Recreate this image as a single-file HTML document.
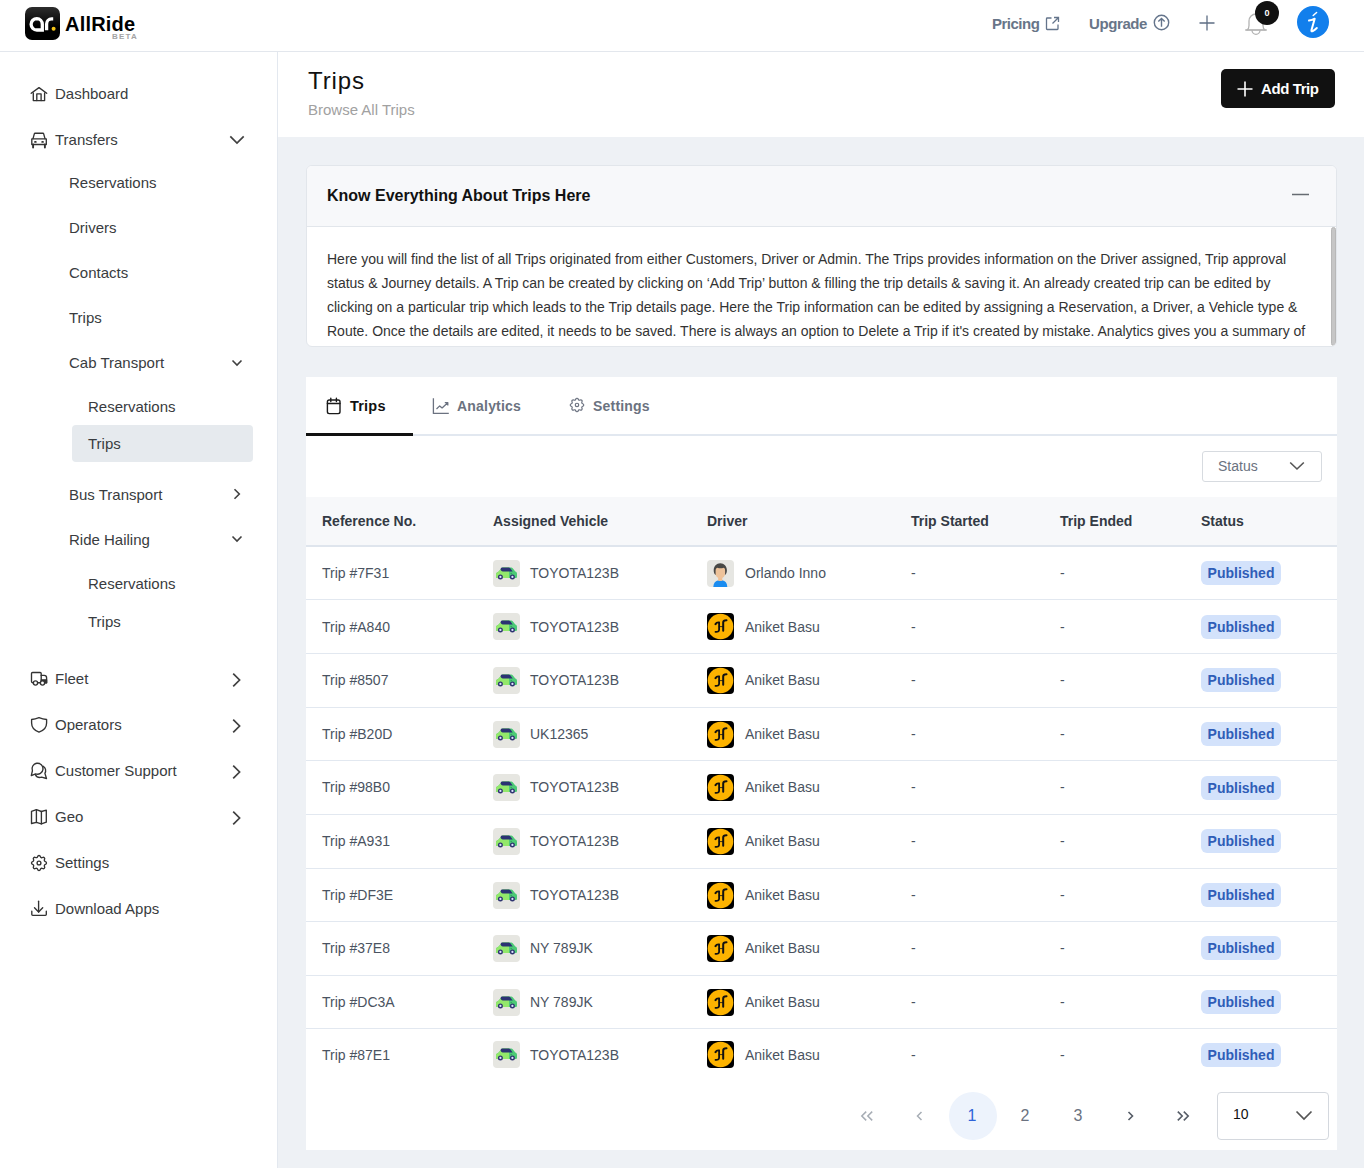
<!DOCTYPE html>
<html><head><meta charset="utf-8">
<style>
*{box-sizing:border-box;margin:0;padding:0}
html,body{width:1364px;height:1168px;overflow:hidden;background:#eef1f5;font-family:"Liberation Sans",sans-serif;color:#374151}
.abs{position:absolute}
svg{display:block}
#hdr{position:absolute;left:0;top:0;width:1364px;height:52px;background:#fff;border-bottom:1px solid #e3e7ed}
#side{position:absolute;left:0;top:52px;width:278px;height:1116px;background:#fff;border-right:1px solid #e3e8ef}
#ph{position:absolute;left:278px;top:52px;width:1086px;height:85px;background:#fff}
.si{position:absolute;font-size:15px;color:#393c40;white-space:nowrap;line-height:18px}
.sico{position:absolute;left:29px;width:20px;height:20px}
.card{position:absolute;background:#fff}
.th{position:absolute;top:512px;font-size:14px;font-weight:bold;color:#333a44;line-height:18px;white-space:nowrap}
.td{position:absolute;font-size:14px;color:#4a5361;line-height:18px;white-space:nowrap}
.badge{position:absolute;left:1201px;width:80px;height:24px;border-radius:6px;background:#d3e2fb;color:#2f5db7;font-weight:bold;font-size:14px;line-height:24px;text-align:center}
.rb{position:absolute;left:306px;width:1031px;height:1px;background:#e2e8f0}
.pg{position:absolute;top:1092px;width:48px;height:48px;line-height:48px;text-align:center;font-size:16px;color:#6b7280}
</style></head><body>

<div id="hdr">
 <div class="abs" style="left:25px;top:7px;width:35px;height:33px;border-radius:7px;background:linear-gradient(#2d2d2d,#000 60%)">
  <svg width="35" height="33" viewBox="0 0 35 33"><path d="M11.8 11.6a5.7 5.7 0 1 0 0 11.4h5.5V17.3a5.7 5.7 0 0 0-5.5-5.7z" fill="none" stroke="#fff" stroke-width="3.3"/><path d="M21.6 23.2v-6.3a5 5 0 0 1 5-5h1.6" fill="none" stroke="#fff" stroke-width="3.3"/><circle cx="28.6" cy="21.8" r="2" fill="#f5c518"/></svg>
 </div>
 <div class="abs" style="left:65px;top:12px;font-size:20px;font-weight:bold;color:#000;letter-spacing:0.2px;line-height:24px">AllRide</div>
 <div class="abs" style="left:112px;top:32px;font-size:8px;font-weight:bold;color:#a3a3a3;letter-spacing:1.2px;line-height:9px">BETA</div>
 <div class="abs" style="left:992px;top:15px;font-size:15px;font-weight:bold;color:#687588;letter-spacing:-0.5px;line-height:18px">Pricing</div>
 <svg class="abs" style="left:1045px;top:16px" width="15" height="15" viewBox="0 0 15 15"><path d="M6.5 2H2.2c-.4 0-.7.3-.7.7v10.1c0 .4.3.7.7.7h10.1c.4 0 .7-.3.7-.7V8.5" fill="none" stroke="#64748b" stroke-width="1.3"/><path d="M9 1.5h4.5V6M13.3 1.7 7.5 7.5" fill="none" stroke="#64748b" stroke-width="1.3"/></svg>
 <div class="abs" style="left:1089px;top:15px;font-size:15px;font-weight:bold;color:#687588;letter-spacing:-0.4px;line-height:18px">Upgrade</div>
 <svg class="abs" style="left:1153px;top:14px" width="17" height="17" viewBox="0 0 17 17"><circle cx="8.5" cy="8.5" r="7.2" fill="none" stroke="#64748b" stroke-width="1.4"/><path d="M8.5 12.8V4.6M5.3 7.6l3.2-3.2 3.2 3.2" fill="none" stroke="#64748b" stroke-width="1.4"/></svg>
 <svg class="abs" style="left:1198px;top:14px" width="18" height="18" viewBox="0 0 18 18"><path d="M9 1.5v15M1.5 9h15" stroke="#5e6e84" stroke-width="1.3"/></svg>
 <svg class="abs" style="left:1243px;top:11px" width="26" height="26" viewBox="0 0 26 26"><path d="M2.3 19H23.7" stroke="#adadad" stroke-width="1.6"/><path d="M4 19c1.5-.8 2-2.5 2-4.5V10a7 7 0 0 1 14 0v4.5c0 2 .5 3.7 2 4.5" fill="none" stroke="#b3b3b3" stroke-width="1.3"/><path d="M9 19.3a4 4 0 0 0 8 0" fill="none" stroke="#b3b3b3" stroke-width="1.3"/></svg>
 <div class="abs" style="left:1255px;top:1px;width:24px;height:24px;border-radius:50%;background:#111;color:#fff;font-size:9px;font-weight:bold;text-align:center;line-height:25px">0</div>
 <div class="abs" style="left:1297px;top:6px;width:32px;height:32px;border-radius:50%;background:#127fec"></div>
 <svg class="abs" style="left:1297px;top:6px" width="32" height="32" viewBox="0 0 32 32"><path d="M12 14.6Q14.8 14.2 17.7 12.7L14.5 24Q14 25.9 15.7 25.1Q17.6 24.1 19.8 22" fill="none" stroke="#fff" stroke-width="2" stroke-linecap="round" stroke-linejoin="round"/><path d="M16.2 9.5 19.6 6.5" stroke="#fff" stroke-width="1.5" stroke-linecap="round"/></svg>
</div>

<div id="side"></div>
<div class="abs" style="left:72px;top:425px;width:181px;height:37px;border-radius:4px;background:#e6eaee"></div>
<div class="si" style="left:55px;top:85px">Dashboard</div>
<svg class="sico" style="top:84px" viewBox="0 0 20 20" fill="none" stroke="#333" stroke-width="1.35" stroke-linecap="round" stroke-linejoin="round"><path d="M2.2 9.3 10 3.6l7.7 5.7"/><path d="M4.3 9v7.6h11.3V9"/><path d="M7.8 16.6V9.9h4.3v6.7"/></svg>
<div class="si" style="left:55px;top:131px">Transfers</div>
<svg class="sico" style="top:130px" viewBox="0 0 20 20" fill="none" stroke="#333" stroke-width="1.35" stroke-linecap="round" stroke-linejoin="round"><path d="M4 8.6 5.4 3.6c.1-.3.3-.4.6-.4h8c.3 0 .5.1.6.4L16 8.6"/><path d="M2.8 8.9h14.5v5.6H2.8z"/><path d="M6 11.9h.8M13.2 11.9h.8" stroke-width="1.8"/><path d="M4.1 14.5v3M15.9 14.5v3" stroke-width="1.9"/></svg>
<svg class="abs" style="left:229px;top:134px" width="16" height="12" viewBox="0 0 16 12"><path d="M1.3 2.3 8 9l6.7-6.7" fill="none" stroke="#404040" stroke-width="1.7"/></svg>
<div class="si" style="left:69px;top:174px">Reservations</div>
<div class="si" style="left:69px;top:219px">Drivers</div>
<div class="si" style="left:69px;top:264px">Contacts</div>
<div class="si" style="left:69px;top:309px">Trips</div>
<div class="si" style="left:69px;top:354px">Cab Transport</div>
<svg class="abs" style="left:231px;top:358px" width="12" height="10" viewBox="0 0 12 10"><path d="M1.5 2.5 6 7l4.5-4.5" fill="none" stroke="#404040" stroke-width="1.6"/></svg>
<div class="si" style="left:88px;top:398px">Reservations</div>
<div class="si" style="left:88px;top:435px">Trips</div>
<div class="si" style="left:69px;top:486px">Bus Transport</div>
<svg class="abs" style="left:231px;top:488px" width="12" height="12" viewBox="0 0 12 12"><path d="M3.5 1.2 8.3 6l-4.8 4.8" fill="none" stroke="#404040" stroke-width="1.6"/></svg>
<div class="si" style="left:69px;top:531px">Ride Hailing</div>
<svg class="abs" style="left:231px;top:534px" width="12" height="10" viewBox="0 0 12 10"><path d="M1.5 2.5 6 7l4.5-4.5" fill="none" stroke="#404040" stroke-width="1.6"/></svg>
<div class="si" style="left:88px;top:575px">Reservations</div>
<div class="si" style="left:88px;top:613px">Trips</div>
<div class="si" style="left:55px;top:670px">Fleet</div>
<svg class="sico" style="top:669px" viewBox="0 0 20 20" fill="none" stroke="#333" stroke-width="1.35" stroke-linecap="round" stroke-linejoin="round"><path d="M4.2 13.7H3.6c-.6 0-1.1-.5-1.1-1.1V4.6c0-.6.5-1.1 1.1-1.1h7.5c.6 0 1.1.5 1.1 1.1v9.1H8.6"/><path d="M12.2 6.4h3c1.3 0 2.4 1.1 2.4 2.4v4.9h-1.2"/><path d="M12.3 10.8h5.3v2.9h-5.3z" fill="#333"/><circle cx="6.5" cy="14" r="2.1" fill="#fff"/><circle cx="13.5" cy="14" r="2.1" fill="#fff"/></svg>
<svg class="abs" style="left:229px;top:672px" width="16" height="16" viewBox="0 0 16 16"><path d="M4.2 1.6 10.6 8l-6.4 6.4" fill="none" stroke="#404040" stroke-width="1.7"/></svg>
<div class="si" style="left:55px;top:716px">Operators</div>
<svg class="sico" style="top:715px" viewBox="0 0 20 20" fill="none" stroke="#333" stroke-width="1.35" stroke-linecap="round" stroke-linejoin="round"><path d="M2.6 4.5Q6.2 4.2 10 2.6 13.8 4.2 17.6 4.5V8c0 4.2-3 7.6-7.6 9.1C5.6 15.6 2.6 12.2 2.6 8z"/></svg>
<svg class="abs" style="left:229px;top:718px" width="16" height="16" viewBox="0 0 16 16"><path d="M4.2 1.6 10.6 8l-6.4 6.4" fill="none" stroke="#404040" stroke-width="1.7"/></svg>
<div class="si" style="left:55px;top:762px">Customer Support</div>
<svg class="sico" style="top:761px" viewBox="0 0 20 20" fill="none" stroke="#333" stroke-width="1.35" stroke-linecap="round" stroke-linejoin="round"><path d="M3.4 9.8 2.3 14.6l4.3-1.7A5.5 5.5 0 1 0 3.4 9.8z"/><path d="M14.2 5.2a5.3 5.3 0 0 1 1.7 7.2l1.6 5.1-4.9-1.3a5.3 5.3 0 0 1-6.3-2.6"/></svg>
<svg class="abs" style="left:229px;top:764px" width="16" height="16" viewBox="0 0 16 16"><path d="M4.2 1.6 10.6 8l-6.4 6.4" fill="none" stroke="#404040" stroke-width="1.7"/></svg>
<div class="si" style="left:55px;top:808px">Geo</div>
<svg class="sico" style="top:807px" viewBox="0 0 20 20" fill="none" stroke="#333" stroke-width="1.35" stroke-linecap="round" stroke-linejoin="round"><path d="M2.5 4.3 7.4 2.6l5 1.9 4.9-1.4v12.1l-4.9 1.7-5-1.6-4.9 1.2z"/><path d="M7.4 2.6v12.7M12.4 4.5v12.4"/></svg>
<svg class="abs" style="left:229px;top:810px" width="16" height="16" viewBox="0 0 16 16"><path d="M4.2 1.6 10.6 8l-6.4 6.4" fill="none" stroke="#404040" stroke-width="1.7"/></svg>
<div class="si" style="left:55px;top:854px">Settings</div>
<svg class="sico" style="top:853px" viewBox="0 0 20 20" fill="none" stroke="#333" stroke-width="1.35" stroke-linecap="round" stroke-linejoin="round"><g transform="scale(.8333)"><path d="M10.325 4.317c.426-1.756 2.924-1.756 3.35 0a1.724 1.724 0 0 0 2.573 1.066c1.543-.94 3.31.826 2.37 2.37a1.724 1.724 0 0 0 1.065 2.572c1.756.426 1.756 2.924 0 3.35a1.724 1.724 0 0 0-1.066 2.573c.94 1.543-.826 3.31-2.37 2.37a1.724 1.724 0 0 0-2.572 1.065c-.426 1.756-2.924 1.756-3.35 0a1.724 1.724 0 0 0-2.573-1.066c-1.543.94-3.31-.826-2.37-2.37a1.724 1.724 0 0 0-1.065-2.572c-1.756-.426-1.756-2.924 0-3.35a1.724 1.724 0 0 0 1.066-2.573c-.94-1.543.826-3.31 2.37-2.37 1 .608 2.296.07 2.572-1.065z" stroke-width="1.6"/><circle cx="12" cy="12" r="2.3" stroke-width="1.6"/></g></svg>
<div class="si" style="left:55px;top:900px">Download Apps</div>
<svg class="sico" style="top:899px" viewBox="0 0 20 20" fill="none" stroke="#333" stroke-width="1.35" stroke-linecap="round" stroke-linejoin="round"><path d="M9.6 2.2V13"/><path d="M5.5 8.8 9.6 13l4.1-4.2"/><path d="M2.8 12.2v3.3c0 .5.4.8.9.8h12.7c.5 0 .9-.3.9-.8v-3.3"/></svg>
<div id="ph">
 <div class="abs" style="left:30px;top:15px;font-size:24px;color:#111;letter-spacing:0.9px;line-height:28px">Trips</div>
 <div class="abs" style="left:30px;top:49px;font-size:15px;color:#a1a1a1;line-height:18px">Browse All Trips</div>
 <div class="abs" style="left:943px;top:17px;width:114px;height:39px;background:#111;border-radius:5px"></div>
 <svg class="abs" style="left:959px;top:29px" width="16" height="16" viewBox="0 0 16 16"><path d="M8 0.5v15M0.5 8h15" stroke="#fff" stroke-width="1.6"/></svg>
 <div class="abs" style="left:983px;top:28px;font-size:15px;font-weight:bold;color:#fff;letter-spacing:-0.4px;line-height:18px">Add Trip</div>
</div>

<div class="card" style="left:306px;top:165px;width:1031px;height:182px;border:1px solid #e2e6eb;border-radius:6px;overflow:hidden">
 <div class="abs" style="left:0;top:0;width:1031px;height:61px;background:#f7f8fa;border-bottom:1px solid #e2e6eb"></div>
 <div class="abs" style="left:20px;top:21px;font-size:16px;font-weight:bold;color:#111;line-height:18px">Know Everything About Trips Here</div>
 <svg class="abs" style="left:985px;top:27px" width="17" height="3" viewBox="0 0 17 3"><path d="M0 1.5h17" stroke="#666b72" stroke-width="1.6"/></svg>
 <div class="abs" style="left:20px;top:81px;font-size:14px;color:#333;line-height:24px;white-space:nowrap">Here you will find the list of all Trips originated from either Customers, Driver or Admin. The Trips provides information on the Driver assigned, Trip approval<br>status &amp; Journey details. A Trip can be created by clicking on ‘Add Trip’ button &amp; filling the trip details &amp; saving it. An already created trip can be edited by<br>clicking on a particular trip which leads to the Trip details page. Here the Trip information can be edited by assigning a Reservation, a Driver, a Vehicle type &amp;<br>Route. Once the details are edited, it needs to be saved. There is always an option to Delete a Trip if it's created by mistake. Analytics gives you a summary of</div>
 <div class="abs" style="left:1024px;top:61px;width:5px;height:119px;border-radius:3px;background:#c6c6c6;border:1px solid #b8b8b8"></div>
</div>

<div class="card" style="left:306px;top:377px;width:1031px;height:773px"></div>
<div class="abs" style="left:306px;top:434px;width:1031px;height:2px;background:#e2e8f0"></div>
<div class="abs" style="left:306px;top:433px;width:107px;height:3px;background:#111"></div>
<svg class="abs" style="left:325px;top:396px" width="18" height="20" viewBox="0 0 18 20" fill="none" stroke="#1a1a1a" stroke-width="1.4" stroke-linecap="round" stroke-linejoin="round"><rect x="2.4" y="4" width="12.6" height="13.6" rx="1.8"/><path d="M5.8 2.3v3.2M11.4 2.3v3.2M2.4 7.5h12.6"/></svg>
<div class="abs" style="left:350px;top:397px;font-size:14.5px;font-weight:bold;color:#111;line-height:18px;letter-spacing:0.2px">Trips</div>
<svg class="abs" style="left:431px;top:396px" width="20" height="20" viewBox="0 0 20 20" fill="none" stroke="#6b7280" stroke-width="1.3" stroke-linejoin="round"><path d="M2.4 2.2v15.2h15.4"/><path d="M5.5 13l3.2-3.1 2.4 2 5.6-5.2M13.8 6.6h3v3"/></svg>
<div class="abs" style="left:457px;top:397px;font-size:14px;font-weight:bold;color:#6b7280;line-height:18px;letter-spacing:0.2px">Analytics</div>
<svg class="abs" style="left:568px;top:396px" width="18" height="18" viewBox="0 0 20 20" fill="none" stroke="#6b7280" stroke-width="1.6" stroke-linecap="round" stroke-linejoin="round"><g transform="scale(.8333)"><path d="M10.325 4.317c.426-1.756 2.924-1.756 3.35 0a1.724 1.724 0 0 0 2.573 1.066c1.543-.94 3.31.826 2.37 2.37a1.724 1.724 0 0 0 1.065 2.572c1.756.426 1.756 2.924 0 3.35a1.724 1.724 0 0 0-1.066 2.573c.94 1.543-.826 3.31-2.37 2.37a1.724 1.724 0 0 0-2.572 1.065c-.426 1.756-2.924 1.756-3.35 0a1.724 1.724 0 0 0-2.573-1.066c-1.543.94-3.31-.826-2.37-2.37a1.724 1.724 0 0 0-1.065-2.572c-1.756-.426-1.756-2.924 0-3.35a1.724 1.724 0 0 0 1.066-2.573c-.94-1.543.826-3.31 2.37-2.37 1 .608 2.296.07 2.572-1.065z" stroke-width="1.6"/><circle cx="12" cy="12" r="2.3" stroke-width="1.6"/></g></svg>
<div class="abs" style="left:593px;top:397px;font-size:14px;font-weight:bold;color:#6b7280;line-height:18px;letter-spacing:0.2px">Settings</div>
<div class="abs" style="left:1202px;top:451px;width:120px;height:31px;border:1px solid #d7dbe0;border-radius:3px;background:#fff"></div>
<div class="abs" style="left:1218px;top:457px;font-size:14px;color:#6b7280;line-height:18px">Status</div>
<svg class="abs" style="left:1289px;top:460px" width="16" height="12" viewBox="0 0 16 12"><path d="M1.2 2.5 8 9l6.8-6.5" fill="none" stroke="#555" stroke-width="1.6"/></svg>
<div class="abs" style="left:306px;top:497px;width:1031px;height:48px;background:#f7f8fa"></div>
<div class="abs" style="left:306px;top:545px;width:1031px;height:2px;background:#dfe5ed"></div>

<div class="th" style="left:322px">Reference No.</div>
<div class="th" style="left:493px">Assigned Vehicle</div>
<div class="th" style="left:707px">Driver</div>
<div class="th" style="left:911px">Trip Started</div>
<div class="th" style="left:1060px">Trip Ended</div>
<div class="th" style="left:1201px">Status</div>
<div class="rb" style="top:599px"></div>
<div class="td" style="left:322px;top:564px">Trip #7F31</div>
<div class="abs" style="left:493px;top:560px"><svg width="27" height="27" viewBox="0 0 27 27"><defs><clipPath id="cl"><rect x="0" y="0" width="16.1" height="27"/></clipPath></defs><rect width="27" height="27" rx="4" fill="#e6e6e1"/><path d="M3.2 17.8 3 14.3c0-1.2 1-2.1 2.4-2.6l2.9-3.3c.5-.6 1.2-.9 1.9-.9h8c.6 0 1.1.3 1.5.7l2.6 3.3c1 .3 1.7 1.2 1.7 2.3v3.3c0 .5-.4.9-.9.9H4z" fill="#4cca76"/><path clip-path="url(#cl)" d="M3.2 17.8 3 14.3c0-1.2 1-2.1 2.4-2.6l2.9-3.3c.5-.6 1.2-.9 1.9-.9h8c.6 0 1.1.3 1.5.7l2.6 3.3c1 .3 1.7 1.2 1.7 2.3v3.3c0 .5-.4.9-.9.9H4z" fill="#93e86b"/><path d="M7.6 9.2c0-1 .8-1.7 1.8-1.7h6.4c.5 0 1 .2 1.3.6l2.6 3.3H9.9c-1.3 0-2.3-1-2.3-2.2z" fill="#2b3273"/><circle cx="7.4" cy="16.9" r="2.5" fill="#2e3470"/><circle cx="7.4" cy="16.9" r="1.1" fill="#dfe6ff"/><circle cx="19.4" cy="16.9" r="2.5" fill="#2e3470"/><circle cx="19.4" cy="16.9" r="1.1" fill="#dfe6ff"/><rect x="17.6" y="13.2" width="1.2" height=".7" fill="#2b7d5a"/></svg></div>
<div class="td" style="left:530px;top:564px">TOYOTA123B</div>
<div class="abs" style="left:707px;top:560px"><svg width="27" height="27" viewBox="0 0 27 27"><rect width="27" height="27" rx="4" fill="#e6e6e2"/><path d="M6.3 27c.2-4 2.2-6.3 5.2-6.7q1.8 1 3.7 0c3.1.4 5 2.7 5.1 6.7z" fill="#1a8cf0"/><rect x="11.2" y="16" width="4.1" height="4.8" fill="#f0bd8f"/><path d="M6.7 10.2c0-4 2.8-6.9 6.6-6.9s6.6 2.9 6.6 6.9c0 2.2-.6 3.7-1.6 4.6H8.3c-1-.9-1.6-2.4-1.6-4.6z" fill="#484846"/><path d="M8.6 10.6c0-2 1.2-2.9 2.3-2.7q2.6.8 5.3 0c1.1-.2 1.9.7 1.9 2.7v2.9c0 2.6-2.1 5-4.75 5S8.6 16.1 8.6 13.5z" fill="#edc29a"/></svg></div>
<div class="td" style="left:745px;top:564px">Orlando Inno</div>
<div class="td" style="left:911px;top:564px">-</div>
<div class="td" style="left:1060px;top:564px">-</div>
<div class="badge" style="top:561px">Published</div>
<div class="rb" style="top:653px"></div>
<div class="td" style="left:322px;top:618px">Trip #A840</div>
<div class="abs" style="left:493px;top:613px"><svg width="27" height="27" viewBox="0 0 27 27"><defs><clipPath id="cl"><rect x="0" y="0" width="16.1" height="27"/></clipPath></defs><rect width="27" height="27" rx="4" fill="#e6e6e1"/><path d="M3.2 17.8 3 14.3c0-1.2 1-2.1 2.4-2.6l2.9-3.3c.5-.6 1.2-.9 1.9-.9h8c.6 0 1.1.3 1.5.7l2.6 3.3c1 .3 1.7 1.2 1.7 2.3v3.3c0 .5-.4.9-.9.9H4z" fill="#4cca76"/><path clip-path="url(#cl)" d="M3.2 17.8 3 14.3c0-1.2 1-2.1 2.4-2.6l2.9-3.3c.5-.6 1.2-.9 1.9-.9h8c.6 0 1.1.3 1.5.7l2.6 3.3c1 .3 1.7 1.2 1.7 2.3v3.3c0 .5-.4.9-.9.9H4z" fill="#93e86b"/><path d="M7.6 9.2c0-1 .8-1.7 1.8-1.7h6.4c.5 0 1 .2 1.3.6l2.6 3.3H9.9c-1.3 0-2.3-1-2.3-2.2z" fill="#2b3273"/><circle cx="7.4" cy="16.9" r="2.5" fill="#2e3470"/><circle cx="7.4" cy="16.9" r="1.1" fill="#dfe6ff"/><circle cx="19.4" cy="16.9" r="2.5" fill="#2e3470"/><circle cx="19.4" cy="16.9" r="1.1" fill="#dfe6ff"/><rect x="17.6" y="13.2" width="1.2" height=".7" fill="#2b7d5a"/></svg></div>
<div class="td" style="left:530px;top:618px">TOYOTA123B</div>
<div class="abs" style="left:707px;top:613px"><svg width="27" height="27" viewBox="0 0 27 27"><rect width="27" height="27" rx="4" fill="#000"/><circle cx="13.5" cy="13.5" r="12.8" fill="#fdb300"/><g fill="none" stroke="#111" stroke-linecap="round"><path d="M8.4 11.2c.7-1.4 2.1-1.9 3.7-1.7v7.3c0 1.6-1.5 2.3-3.6 2" stroke-width="1.8"/><path d="M16.2 17.8V9.6c0-1.3 1.4-2.3 3.3-2.3" stroke-width="2"/><path d="M12.2 13.6h4" stroke-width=".8"/></g><circle cx="8.7" cy="11" r=".9" fill="#111"/></svg></div>
<div class="td" style="left:745px;top:618px">Aniket Basu</div>
<div class="td" style="left:911px;top:618px">-</div>
<div class="td" style="left:1060px;top:618px">-</div>
<div class="badge" style="top:615px">Published</div>
<div class="rb" style="top:707px"></div>
<div class="td" style="left:322px;top:671px">Trip #8507</div>
<div class="abs" style="left:493px;top:667px"><svg width="27" height="27" viewBox="0 0 27 27"><defs><clipPath id="cl"><rect x="0" y="0" width="16.1" height="27"/></clipPath></defs><rect width="27" height="27" rx="4" fill="#e6e6e1"/><path d="M3.2 17.8 3 14.3c0-1.2 1-2.1 2.4-2.6l2.9-3.3c.5-.6 1.2-.9 1.9-.9h8c.6 0 1.1.3 1.5.7l2.6 3.3c1 .3 1.7 1.2 1.7 2.3v3.3c0 .5-.4.9-.9.9H4z" fill="#4cca76"/><path clip-path="url(#cl)" d="M3.2 17.8 3 14.3c0-1.2 1-2.1 2.4-2.6l2.9-3.3c.5-.6 1.2-.9 1.9-.9h8c.6 0 1.1.3 1.5.7l2.6 3.3c1 .3 1.7 1.2 1.7 2.3v3.3c0 .5-.4.9-.9.9H4z" fill="#93e86b"/><path d="M7.6 9.2c0-1 .8-1.7 1.8-1.7h6.4c.5 0 1 .2 1.3.6l2.6 3.3H9.9c-1.3 0-2.3-1-2.3-2.2z" fill="#2b3273"/><circle cx="7.4" cy="16.9" r="2.5" fill="#2e3470"/><circle cx="7.4" cy="16.9" r="1.1" fill="#dfe6ff"/><circle cx="19.4" cy="16.9" r="2.5" fill="#2e3470"/><circle cx="19.4" cy="16.9" r="1.1" fill="#dfe6ff"/><rect x="17.6" y="13.2" width="1.2" height=".7" fill="#2b7d5a"/></svg></div>
<div class="td" style="left:530px;top:671px">TOYOTA123B</div>
<div class="abs" style="left:707px;top:667px"><svg width="27" height="27" viewBox="0 0 27 27"><rect width="27" height="27" rx="4" fill="#000"/><circle cx="13.5" cy="13.5" r="12.8" fill="#fdb300"/><g fill="none" stroke="#111" stroke-linecap="round"><path d="M8.4 11.2c.7-1.4 2.1-1.9 3.7-1.7v7.3c0 1.6-1.5 2.3-3.6 2" stroke-width="1.8"/><path d="M16.2 17.8V9.6c0-1.3 1.4-2.3 3.3-2.3" stroke-width="2"/><path d="M12.2 13.6h4" stroke-width=".8"/></g><circle cx="8.7" cy="11" r=".9" fill="#111"/></svg></div>
<div class="td" style="left:745px;top:671px">Aniket Basu</div>
<div class="td" style="left:911px;top:671px">-</div>
<div class="td" style="left:1060px;top:671px">-</div>
<div class="badge" style="top:668px">Published</div>
<div class="rb" style="top:760px"></div>
<div class="td" style="left:322px;top:725px">Trip #B20D</div>
<div class="abs" style="left:493px;top:721px"><svg width="27" height="27" viewBox="0 0 27 27"><defs><clipPath id="cl"><rect x="0" y="0" width="16.1" height="27"/></clipPath></defs><rect width="27" height="27" rx="4" fill="#e6e6e1"/><path d="M3.2 17.8 3 14.3c0-1.2 1-2.1 2.4-2.6l2.9-3.3c.5-.6 1.2-.9 1.9-.9h8c.6 0 1.1.3 1.5.7l2.6 3.3c1 .3 1.7 1.2 1.7 2.3v3.3c0 .5-.4.9-.9.9H4z" fill="#4cca76"/><path clip-path="url(#cl)" d="M3.2 17.8 3 14.3c0-1.2 1-2.1 2.4-2.6l2.9-3.3c.5-.6 1.2-.9 1.9-.9h8c.6 0 1.1.3 1.5.7l2.6 3.3c1 .3 1.7 1.2 1.7 2.3v3.3c0 .5-.4.9-.9.9H4z" fill="#93e86b"/><path d="M7.6 9.2c0-1 .8-1.7 1.8-1.7h6.4c.5 0 1 .2 1.3.6l2.6 3.3H9.9c-1.3 0-2.3-1-2.3-2.2z" fill="#2b3273"/><circle cx="7.4" cy="16.9" r="2.5" fill="#2e3470"/><circle cx="7.4" cy="16.9" r="1.1" fill="#dfe6ff"/><circle cx="19.4" cy="16.9" r="2.5" fill="#2e3470"/><circle cx="19.4" cy="16.9" r="1.1" fill="#dfe6ff"/><rect x="17.6" y="13.2" width="1.2" height=".7" fill="#2b7d5a"/></svg></div>
<div class="td" style="left:530px;top:725px">UK12365</div>
<div class="abs" style="left:707px;top:721px"><svg width="27" height="27" viewBox="0 0 27 27"><rect width="27" height="27" rx="4" fill="#000"/><circle cx="13.5" cy="13.5" r="12.8" fill="#fdb300"/><g fill="none" stroke="#111" stroke-linecap="round"><path d="M8.4 11.2c.7-1.4 2.1-1.9 3.7-1.7v7.3c0 1.6-1.5 2.3-3.6 2" stroke-width="1.8"/><path d="M16.2 17.8V9.6c0-1.3 1.4-2.3 3.3-2.3" stroke-width="2"/><path d="M12.2 13.6h4" stroke-width=".8"/></g><circle cx="8.7" cy="11" r=".9" fill="#111"/></svg></div>
<div class="td" style="left:745px;top:725px">Aniket Basu</div>
<div class="td" style="left:911px;top:725px">-</div>
<div class="td" style="left:1060px;top:725px">-</div>
<div class="badge" style="top:722px">Published</div>
<div class="rb" style="top:814px"></div>
<div class="td" style="left:322px;top:778px">Trip #98B0</div>
<div class="abs" style="left:493px;top:774px"><svg width="27" height="27" viewBox="0 0 27 27"><defs><clipPath id="cl"><rect x="0" y="0" width="16.1" height="27"/></clipPath></defs><rect width="27" height="27" rx="4" fill="#e6e6e1"/><path d="M3.2 17.8 3 14.3c0-1.2 1-2.1 2.4-2.6l2.9-3.3c.5-.6 1.2-.9 1.9-.9h8c.6 0 1.1.3 1.5.7l2.6 3.3c1 .3 1.7 1.2 1.7 2.3v3.3c0 .5-.4.9-.9.9H4z" fill="#4cca76"/><path clip-path="url(#cl)" d="M3.2 17.8 3 14.3c0-1.2 1-2.1 2.4-2.6l2.9-3.3c.5-.6 1.2-.9 1.9-.9h8c.6 0 1.1.3 1.5.7l2.6 3.3c1 .3 1.7 1.2 1.7 2.3v3.3c0 .5-.4.9-.9.9H4z" fill="#93e86b"/><path d="M7.6 9.2c0-1 .8-1.7 1.8-1.7h6.4c.5 0 1 .2 1.3.6l2.6 3.3H9.9c-1.3 0-2.3-1-2.3-2.2z" fill="#2b3273"/><circle cx="7.4" cy="16.9" r="2.5" fill="#2e3470"/><circle cx="7.4" cy="16.9" r="1.1" fill="#dfe6ff"/><circle cx="19.4" cy="16.9" r="2.5" fill="#2e3470"/><circle cx="19.4" cy="16.9" r="1.1" fill="#dfe6ff"/><rect x="17.6" y="13.2" width="1.2" height=".7" fill="#2b7d5a"/></svg></div>
<div class="td" style="left:530px;top:778px">TOYOTA123B</div>
<div class="abs" style="left:707px;top:774px"><svg width="27" height="27" viewBox="0 0 27 27"><rect width="27" height="27" rx="4" fill="#000"/><circle cx="13.5" cy="13.5" r="12.8" fill="#fdb300"/><g fill="none" stroke="#111" stroke-linecap="round"><path d="M8.4 11.2c.7-1.4 2.1-1.9 3.7-1.7v7.3c0 1.6-1.5 2.3-3.6 2" stroke-width="1.8"/><path d="M16.2 17.8V9.6c0-1.3 1.4-2.3 3.3-2.3" stroke-width="2"/><path d="M12.2 13.6h4" stroke-width=".8"/></g><circle cx="8.7" cy="11" r=".9" fill="#111"/></svg></div>
<div class="td" style="left:745px;top:778px">Aniket Basu</div>
<div class="td" style="left:911px;top:778px">-</div>
<div class="td" style="left:1060px;top:778px">-</div>
<div class="badge" style="top:776px">Published</div>
<div class="rb" style="top:868px"></div>
<div class="td" style="left:322px;top:832px">Trip #A931</div>
<div class="abs" style="left:493px;top:828px"><svg width="27" height="27" viewBox="0 0 27 27"><defs><clipPath id="cl"><rect x="0" y="0" width="16.1" height="27"/></clipPath></defs><rect width="27" height="27" rx="4" fill="#e6e6e1"/><path d="M3.2 17.8 3 14.3c0-1.2 1-2.1 2.4-2.6l2.9-3.3c.5-.6 1.2-.9 1.9-.9h8c.6 0 1.1.3 1.5.7l2.6 3.3c1 .3 1.7 1.2 1.7 2.3v3.3c0 .5-.4.9-.9.9H4z" fill="#4cca76"/><path clip-path="url(#cl)" d="M3.2 17.8 3 14.3c0-1.2 1-2.1 2.4-2.6l2.9-3.3c.5-.6 1.2-.9 1.9-.9h8c.6 0 1.1.3 1.5.7l2.6 3.3c1 .3 1.7 1.2 1.7 2.3v3.3c0 .5-.4.9-.9.9H4z" fill="#93e86b"/><path d="M7.6 9.2c0-1 .8-1.7 1.8-1.7h6.4c.5 0 1 .2 1.3.6l2.6 3.3H9.9c-1.3 0-2.3-1-2.3-2.2z" fill="#2b3273"/><circle cx="7.4" cy="16.9" r="2.5" fill="#2e3470"/><circle cx="7.4" cy="16.9" r="1.1" fill="#dfe6ff"/><circle cx="19.4" cy="16.9" r="2.5" fill="#2e3470"/><circle cx="19.4" cy="16.9" r="1.1" fill="#dfe6ff"/><rect x="17.6" y="13.2" width="1.2" height=".7" fill="#2b7d5a"/></svg></div>
<div class="td" style="left:530px;top:832px">TOYOTA123B</div>
<div class="abs" style="left:707px;top:828px"><svg width="27" height="27" viewBox="0 0 27 27"><rect width="27" height="27" rx="4" fill="#000"/><circle cx="13.5" cy="13.5" r="12.8" fill="#fdb300"/><g fill="none" stroke="#111" stroke-linecap="round"><path d="M8.4 11.2c.7-1.4 2.1-1.9 3.7-1.7v7.3c0 1.6-1.5 2.3-3.6 2" stroke-width="1.8"/><path d="M16.2 17.8V9.6c0-1.3 1.4-2.3 3.3-2.3" stroke-width="2"/><path d="M12.2 13.6h4" stroke-width=".8"/></g><circle cx="8.7" cy="11" r=".9" fill="#111"/></svg></div>
<div class="td" style="left:745px;top:832px">Aniket Basu</div>
<div class="td" style="left:911px;top:832px">-</div>
<div class="td" style="left:1060px;top:832px">-</div>
<div class="badge" style="top:829px">Published</div>
<div class="rb" style="top:921px"></div>
<div class="td" style="left:322px;top:886px">Trip #DF3E</div>
<div class="abs" style="left:493px;top:882px"><svg width="27" height="27" viewBox="0 0 27 27"><defs><clipPath id="cl"><rect x="0" y="0" width="16.1" height="27"/></clipPath></defs><rect width="27" height="27" rx="4" fill="#e6e6e1"/><path d="M3.2 17.8 3 14.3c0-1.2 1-2.1 2.4-2.6l2.9-3.3c.5-.6 1.2-.9 1.9-.9h8c.6 0 1.1.3 1.5.7l2.6 3.3c1 .3 1.7 1.2 1.7 2.3v3.3c0 .5-.4.9-.9.9H4z" fill="#4cca76"/><path clip-path="url(#cl)" d="M3.2 17.8 3 14.3c0-1.2 1-2.1 2.4-2.6l2.9-3.3c.5-.6 1.2-.9 1.9-.9h8c.6 0 1.1.3 1.5.7l2.6 3.3c1 .3 1.7 1.2 1.7 2.3v3.3c0 .5-.4.9-.9.9H4z" fill="#93e86b"/><path d="M7.6 9.2c0-1 .8-1.7 1.8-1.7h6.4c.5 0 1 .2 1.3.6l2.6 3.3H9.9c-1.3 0-2.3-1-2.3-2.2z" fill="#2b3273"/><circle cx="7.4" cy="16.9" r="2.5" fill="#2e3470"/><circle cx="7.4" cy="16.9" r="1.1" fill="#dfe6ff"/><circle cx="19.4" cy="16.9" r="2.5" fill="#2e3470"/><circle cx="19.4" cy="16.9" r="1.1" fill="#dfe6ff"/><rect x="17.6" y="13.2" width="1.2" height=".7" fill="#2b7d5a"/></svg></div>
<div class="td" style="left:530px;top:886px">TOYOTA123B</div>
<div class="abs" style="left:707px;top:882px"><svg width="27" height="27" viewBox="0 0 27 27"><rect width="27" height="27" rx="4" fill="#000"/><circle cx="13.5" cy="13.5" r="12.8" fill="#fdb300"/><g fill="none" stroke="#111" stroke-linecap="round"><path d="M8.4 11.2c.7-1.4 2.1-1.9 3.7-1.7v7.3c0 1.6-1.5 2.3-3.6 2" stroke-width="1.8"/><path d="M16.2 17.8V9.6c0-1.3 1.4-2.3 3.3-2.3" stroke-width="2"/><path d="M12.2 13.6h4" stroke-width=".8"/></g><circle cx="8.7" cy="11" r=".9" fill="#111"/></svg></div>
<div class="td" style="left:745px;top:886px">Aniket Basu</div>
<div class="td" style="left:911px;top:886px">-</div>
<div class="td" style="left:1060px;top:886px">-</div>
<div class="badge" style="top:883px">Published</div>
<div class="rb" style="top:975px"></div>
<div class="td" style="left:322px;top:939px">Trip #37E8</div>
<div class="abs" style="left:493px;top:935px"><svg width="27" height="27" viewBox="0 0 27 27"><defs><clipPath id="cl"><rect x="0" y="0" width="16.1" height="27"/></clipPath></defs><rect width="27" height="27" rx="4" fill="#e6e6e1"/><path d="M3.2 17.8 3 14.3c0-1.2 1-2.1 2.4-2.6l2.9-3.3c.5-.6 1.2-.9 1.9-.9h8c.6 0 1.1.3 1.5.7l2.6 3.3c1 .3 1.7 1.2 1.7 2.3v3.3c0 .5-.4.9-.9.9H4z" fill="#4cca76"/><path clip-path="url(#cl)" d="M3.2 17.8 3 14.3c0-1.2 1-2.1 2.4-2.6l2.9-3.3c.5-.6 1.2-.9 1.9-.9h8c.6 0 1.1.3 1.5.7l2.6 3.3c1 .3 1.7 1.2 1.7 2.3v3.3c0 .5-.4.9-.9.9H4z" fill="#93e86b"/><path d="M7.6 9.2c0-1 .8-1.7 1.8-1.7h6.4c.5 0 1 .2 1.3.6l2.6 3.3H9.9c-1.3 0-2.3-1-2.3-2.2z" fill="#2b3273"/><circle cx="7.4" cy="16.9" r="2.5" fill="#2e3470"/><circle cx="7.4" cy="16.9" r="1.1" fill="#dfe6ff"/><circle cx="19.4" cy="16.9" r="2.5" fill="#2e3470"/><circle cx="19.4" cy="16.9" r="1.1" fill="#dfe6ff"/><rect x="17.6" y="13.2" width="1.2" height=".7" fill="#2b7d5a"/></svg></div>
<div class="td" style="left:530px;top:939px">NY 789JK</div>
<div class="abs" style="left:707px;top:935px"><svg width="27" height="27" viewBox="0 0 27 27"><rect width="27" height="27" rx="4" fill="#000"/><circle cx="13.5" cy="13.5" r="12.8" fill="#fdb300"/><g fill="none" stroke="#111" stroke-linecap="round"><path d="M8.4 11.2c.7-1.4 2.1-1.9 3.7-1.7v7.3c0 1.6-1.5 2.3-3.6 2" stroke-width="1.8"/><path d="M16.2 17.8V9.6c0-1.3 1.4-2.3 3.3-2.3" stroke-width="2"/><path d="M12.2 13.6h4" stroke-width=".8"/></g><circle cx="8.7" cy="11" r=".9" fill="#111"/></svg></div>
<div class="td" style="left:745px;top:939px">Aniket Basu</div>
<div class="td" style="left:911px;top:939px">-</div>
<div class="td" style="left:1060px;top:939px">-</div>
<div class="badge" style="top:936px">Published</div>
<div class="rb" style="top:1028px"></div>
<div class="td" style="left:322px;top:993px">Trip #DC3A</div>
<div class="abs" style="left:493px;top:989px"><svg width="27" height="27" viewBox="0 0 27 27"><defs><clipPath id="cl"><rect x="0" y="0" width="16.1" height="27"/></clipPath></defs><rect width="27" height="27" rx="4" fill="#e6e6e1"/><path d="M3.2 17.8 3 14.3c0-1.2 1-2.1 2.4-2.6l2.9-3.3c.5-.6 1.2-.9 1.9-.9h8c.6 0 1.1.3 1.5.7l2.6 3.3c1 .3 1.7 1.2 1.7 2.3v3.3c0 .5-.4.9-.9.9H4z" fill="#4cca76"/><path clip-path="url(#cl)" d="M3.2 17.8 3 14.3c0-1.2 1-2.1 2.4-2.6l2.9-3.3c.5-.6 1.2-.9 1.9-.9h8c.6 0 1.1.3 1.5.7l2.6 3.3c1 .3 1.7 1.2 1.7 2.3v3.3c0 .5-.4.9-.9.9H4z" fill="#93e86b"/><path d="M7.6 9.2c0-1 .8-1.7 1.8-1.7h6.4c.5 0 1 .2 1.3.6l2.6 3.3H9.9c-1.3 0-2.3-1-2.3-2.2z" fill="#2b3273"/><circle cx="7.4" cy="16.9" r="2.5" fill="#2e3470"/><circle cx="7.4" cy="16.9" r="1.1" fill="#dfe6ff"/><circle cx="19.4" cy="16.9" r="2.5" fill="#2e3470"/><circle cx="19.4" cy="16.9" r="1.1" fill="#dfe6ff"/><rect x="17.6" y="13.2" width="1.2" height=".7" fill="#2b7d5a"/></svg></div>
<div class="td" style="left:530px;top:993px">NY 789JK</div>
<div class="abs" style="left:707px;top:989px"><svg width="27" height="27" viewBox="0 0 27 27"><rect width="27" height="27" rx="4" fill="#000"/><circle cx="13.5" cy="13.5" r="12.8" fill="#fdb300"/><g fill="none" stroke="#111" stroke-linecap="round"><path d="M8.4 11.2c.7-1.4 2.1-1.9 3.7-1.7v7.3c0 1.6-1.5 2.3-3.6 2" stroke-width="1.8"/><path d="M16.2 17.8V9.6c0-1.3 1.4-2.3 3.3-2.3" stroke-width="2"/><path d="M12.2 13.6h4" stroke-width=".8"/></g><circle cx="8.7" cy="11" r=".9" fill="#111"/></svg></div>
<div class="td" style="left:745px;top:993px">Aniket Basu</div>
<div class="td" style="left:911px;top:993px">-</div>
<div class="td" style="left:1060px;top:993px">-</div>
<div class="badge" style="top:990px">Published</div>
<div class="td" style="left:322px;top:1046px">Trip #87E1</div>
<div class="abs" style="left:493px;top:1041px"><svg width="27" height="27" viewBox="0 0 27 27"><defs><clipPath id="cl"><rect x="0" y="0" width="16.1" height="27"/></clipPath></defs><rect width="27" height="27" rx="4" fill="#e6e6e1"/><path d="M3.2 17.8 3 14.3c0-1.2 1-2.1 2.4-2.6l2.9-3.3c.5-.6 1.2-.9 1.9-.9h8c.6 0 1.1.3 1.5.7l2.6 3.3c1 .3 1.7 1.2 1.7 2.3v3.3c0 .5-.4.9-.9.9H4z" fill="#4cca76"/><path clip-path="url(#cl)" d="M3.2 17.8 3 14.3c0-1.2 1-2.1 2.4-2.6l2.9-3.3c.5-.6 1.2-.9 1.9-.9h8c.6 0 1.1.3 1.5.7l2.6 3.3c1 .3 1.7 1.2 1.7 2.3v3.3c0 .5-.4.9-.9.9H4z" fill="#93e86b"/><path d="M7.6 9.2c0-1 .8-1.7 1.8-1.7h6.4c.5 0 1 .2 1.3.6l2.6 3.3H9.9c-1.3 0-2.3-1-2.3-2.2z" fill="#2b3273"/><circle cx="7.4" cy="16.9" r="2.5" fill="#2e3470"/><circle cx="7.4" cy="16.9" r="1.1" fill="#dfe6ff"/><circle cx="19.4" cy="16.9" r="2.5" fill="#2e3470"/><circle cx="19.4" cy="16.9" r="1.1" fill="#dfe6ff"/><rect x="17.6" y="13.2" width="1.2" height=".7" fill="#2b7d5a"/></svg></div>
<div class="td" style="left:530px;top:1046px">TOYOTA123B</div>
<div class="abs" style="left:707px;top:1041px"><svg width="27" height="27" viewBox="0 0 27 27"><rect width="27" height="27" rx="4" fill="#000"/><circle cx="13.5" cy="13.5" r="12.8" fill="#fdb300"/><g fill="none" stroke="#111" stroke-linecap="round"><path d="M8.4 11.2c.7-1.4 2.1-1.9 3.7-1.7v7.3c0 1.6-1.5 2.3-3.6 2" stroke-width="1.8"/><path d="M16.2 17.8V9.6c0-1.3 1.4-2.3 3.3-2.3" stroke-width="2"/><path d="M12.2 13.6h4" stroke-width=".8"/></g><circle cx="8.7" cy="11" r=".9" fill="#111"/></svg></div>
<div class="td" style="left:745px;top:1046px">Aniket Basu</div>
<div class="td" style="left:911px;top:1046px">-</div>
<div class="td" style="left:1060px;top:1046px">-</div>
<div class="badge" style="top:1043px">Published</div>
<div class="abs" style="left:949px;top:1092px;width:48px;height:48px;border-radius:50%;background:#edf3fc"></div>
<div class="pg" style="left:948px;color:#2e63d8">1</div>
<div class="pg" style="left:1001px">2</div>
<div class="pg" style="left:1054px">3</div>
<svg class="abs" style="left:859px;top:1108px" width="16" height="16" viewBox="0 0 16 16"><path d="M7.2 3.6 2.8 8l4.4 4.4M13.2 3.6 8.8 8l4.4 4.4" fill="none" stroke="#a7adb5" stroke-width="1.5"/></svg>
<svg class="abs" style="left:912px;top:1108px" width="16" height="16" viewBox="0 0 16 16"><path d="M9.5 4 5.5 8l4 4" fill="none" stroke="#a7adb5" stroke-width="1.5"/></svg>
<svg class="abs" style="left:1122px;top:1108px" width="16" height="16" viewBox="0 0 16 16"><path d="M6.5 4l4 4-4 4" fill="none" stroke="#555c66" stroke-width="1.6"/></svg>
<svg class="abs" style="left:1175px;top:1108px" width="16" height="16" viewBox="0 0 16 16"><path d="M2.8 3.6 7.2 8l-4.4 4.4M8.8 3.6 13.2 8l-4.4 4.4" fill="none" stroke="#555c66" stroke-width="1.6"/></svg>
<div class="abs" style="left:1217px;top:1092px;width:112px;height:48px;border:1px solid #d4d8de;border-radius:4px;background:#fff"></div>
<div class="abs" style="left:1233px;top:1105px;font-size:14px;color:#111;line-height:18px">10</div>
<svg class="abs" style="left:1295px;top:1108px" width="18" height="14" viewBox="0 0 18 14"><path d="M1.5 3.5 9 11l7.5-7.5" fill="none" stroke="#555" stroke-width="1.7"/></svg>

</body></html>
